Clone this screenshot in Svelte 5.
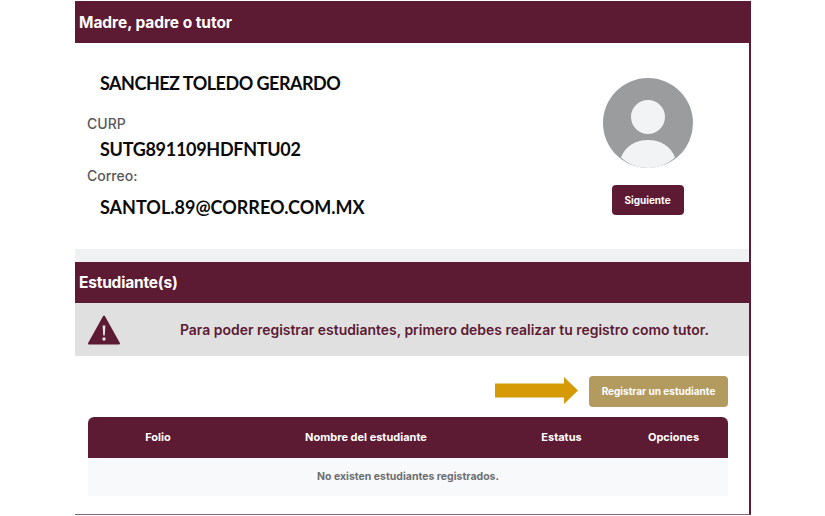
<script>
	const columns = ['Folio', 'Nombre del estudiante', 'Estatus', 'Opciones'];
</script>

<div class="panel">
	<h2 class="bar">Madre, padre o tutor</h2>

	<section class="tutor">
		<div class="data">
			<div class="value name">SANCHEZ TOLEDO GERARDO</div>
			<div class="label curp">CURP</div>
			<div class="value code">SUTG891109HDFNTU02</div>
			<div class="label mail">Correo:</div>
			<div class="value email">SANTOL.89@CORREO.COM.MX</div>
		</div>
		<div class="side">
			<svg class="avatar" viewBox="0 0 90 90" width="90" height="90" aria-hidden="true">
				<circle cx="45" cy="45" r="45" fill="#9b9c9e" />
				<circle cx="45" cy="39" r="17" fill="#f1f3f5" />
				<path d="M18 79.500C22 68 33 62 45 62C57 62 68 68 72 79.500C65 86 55 90 45 90C35 90 25 86 18 79.500Z" fill="#f1f3f5" />
			</svg>
			<button class="next">Siguiente</button>
		</div>
	</section>

	<div class="strip"></div>

	<h2 class="bar second">Estudiante(s)</h2>

	<div class="alert">
		<svg viewBox="0 0 32 30" width="32" height="30" aria-hidden="true">
			<path d="M16 1.500L31 28.500H1Z" fill="#5d1a33" stroke="#5d1a33" stroke-width="2" stroke-linejoin="round" />
			<path d="M14.600 10.500H17.400L16.800 20.500H15.200Z" fill="#e0e0e0" />
			<circle cx="16" cy="24" r="1.700" fill="#e0e0e0" />
		</svg>
		<p>Para poder registrar estudiantes, primero debes realizar tu registro como tutor.</p>
	</div>

	<div class="actions">
		<svg class="arrow" viewBox="0 0 83 27" width="83" height="27" aria-hidden="true">
			<path d="M0 6.500H69V0L83 13.500L69 27V20.500H0Z" fill="#d59a06" />
		</svg>
		<button class="register">Registrar un estudiante</button>
	</div>

	<div class="table">
		<div class="thead">
			{#each columns as col}
				<span>{col}</span>
			{/each}
		</div>
		<div class="empty">No existen estudiantes registrados.</div>
	</div>
</div>

<style>
	:global(body) {
		margin: 0;
		background: #fff;
	}

	.panel {
		box-sizing: border-box;
		width: 676px;
		height: 514px;
		margin: 1px 0 0 75px;
		border-right: 2px solid #5d1a33;
		border-bottom: 1px solid #8a6675;
		font-family: Inter, "Open Sans", sans-serif;
	}

	.bar {
		box-sizing: border-box;
		height: 42px;
		width: 675px;
		margin: 0;
		padding: 1px 4px 0;
		display: flex;
		align-items: center;
		background: #5d1a33;
		color: #fff;
		font-size: 15.500px;
		font-weight: 700;
		letter-spacing: -0.05px;
	}

	.bar.second {
		height: 41px;
		padding-top: 0;
		letter-spacing: -0.2px;
	}

	.tutor {
		height: 206px;
		display: flex;
		justify-content: space-between;
	}

	.data {
		padding: 29px 0 0 12px;
	}

	.value {
		margin-left: 13px;
		font-family: Lato, "Open Sans", sans-serif;
		font-weight: 700;
		font-size: 18px;
		line-height: 22px;
		color: #0b0b0b;
		white-space: nowrap;
	}

	.label {
		font-size: 14px;
		line-height: 16px;
		font-weight: 500;
		color: #58585a;
	}

	.name {
		letter-spacing: -0.5px;
	}

	.curp {
		margin-top: 22px;
	}

	.code {
		margin-top: 6px;
		letter-spacing: -0.3px;
	}

	.mail {
		margin-top: 8px;
	}

	.email {
		margin-top: 12px;
	}

	.side {
		width: 145px;
		margin-right: 29px;
		padding-top: 35px;
		display: flex;
		flex-direction: column;
		align-items: center;
	}

	.avatar {
		display: block;
	}

	.next {
		width: 72px;
		height: 30px;
		margin-top: 17px;
		padding: 0;
		border: 0;
		border-radius: 4px;
		background: #5d1a33;
		color: #fff;
		font-family: inherit;
		font-size: 10px;
		font-weight: 700;
	}

	.strip {
		height: 13px;
		background: #eff1f3;
	}

	.alert {
		height: 53px;
		display: flex;
		align-items: center;
		background: #e0e0e0;
		padding-left: 13px;
		color: #5d1a33;
	}

	.alert svg {
		flex: none;
	}

	.alert p {
		margin: 0 0 0 60px;
		font-size: 13.950px;
		font-weight: 600;
		white-space: nowrap;
	}

	.actions {
		height: 51px;
		display: flex;
		align-items: flex-end;
		justify-content: flex-end;
		padding-right: 21px;
	}

	.arrow {
		margin: 0 11px 3px 0;
	}

	.register {
		width: 139px;
		height: 31px;
		padding: 0 0 2px;
		border: 0;
		border-radius: 4px;
		background: #b39b5f;
		color: #fff;
		font-family: inherit;
		font-size: 10px;
		font-weight: 700;
	}

	.table {
		width: 640px;
		margin: 10px 0 0 13px;
	}

	.thead {
		box-sizing: border-box;
		height: 41px;
		padding-bottom: 2px;
		display: grid;
		grid-template-columns: 140px 276px 115px 109px;
		align-items: center;
		justify-items: center;
		background: #5d1a33;
		border-radius: 6px 6px 0 0;
		color: #fff;
		font-size: 11px;
		font-weight: 700;
	}

	.empty {
		box-sizing: border-box;
		height: 38px;
		padding-bottom: 2px;
		display: flex;
		align-items: center;
		justify-content: center;
		background: #f7f9fb;
		color: #6d6e70;
		font-size: 10.500px;
		font-weight: 700;
	}
</style>
